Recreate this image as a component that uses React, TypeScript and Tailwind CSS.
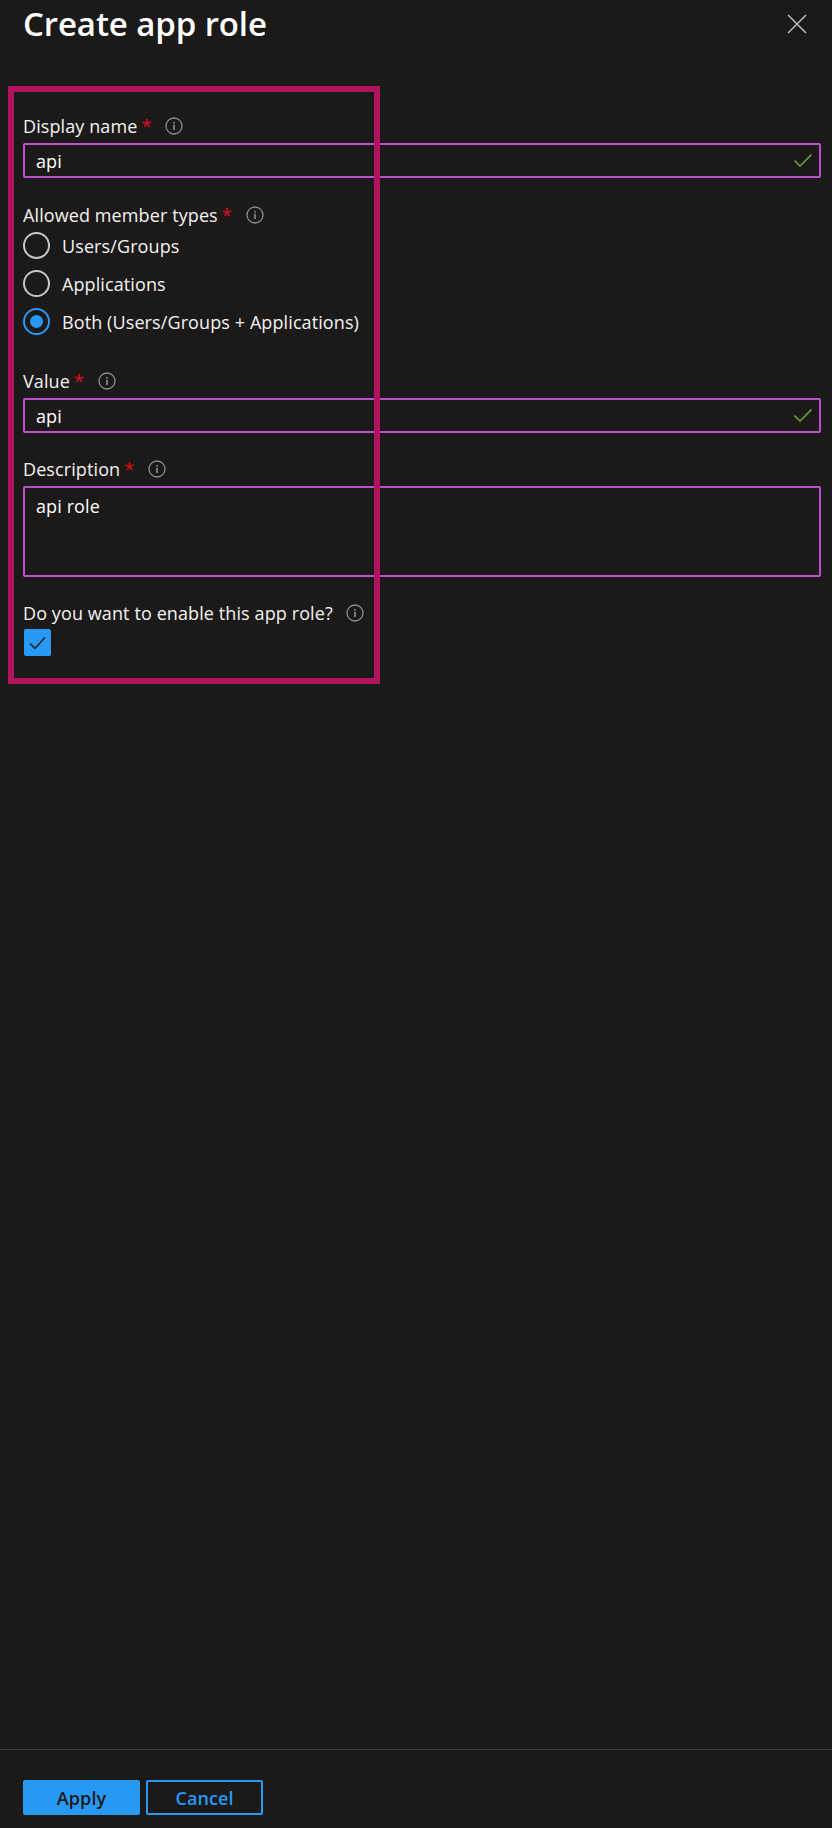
import React from "react";

function Info() {
  return (
    <svg width="18" height="18" viewBox="0 0 18 18" fill="none" className="block shrink-0">
      <circle cx="9" cy="9" r="8" stroke="#8f8d8b" strokeWidth="1.3" />
      <rect x="8.2" y="7.6" width="1.6" height="5.4" fill="#8f8d8b" />
      <rect x="8.2" y="4.9" width="1.6" height="1.6" fill="#8f8d8b" />
    </svg>
  );
}

function Label({ text, required, gap = "ml-[14px]" }: { text: string; required?: boolean; gap?: string }) {
  return (
    <div className="flex items-center h-[22px] mb-[6px]">
      <span>{text}</span>
      {required && <span className="text-[#e00b1c] ml-[4px] leading-none">*</span>}
      <span className={gap}><Info /></span>
    </div>
  );
}

function Tick() {
  return (
    <svg width="18" height="13" viewBox="0 0 18 13" fill="none" className="absolute right-[7px] top-[9px]">
      <path d="M0.5 6.5 L6 12 L17.5 0.5" stroke="#6b9a38" strokeWidth="1.6" />
    </svg>
  );
}

function TextInput({ value }: { value: string }) {
  return (
    <div className="relative h-[35px] border-2 border-[#c04fd0] rounded-[2px] pl-[11px] flex items-center text-white">
      {value}
      <Tick />
    </div>
  );
}

function Radio({ label, checked }: { label: string; checked?: boolean }) {
  return (
    <div className="flex items-center h-[27px] gap-[12px]">
      <span
        className={
          "w-[27px] h-[27px] rounded-full border-2 flex items-center justify-center " +
          (checked ? "border-[#2899f5]" : "border-[#c8c6c4]")
        }
      >
        {checked && <span className="w-[13px] h-[13px] rounded-full bg-[#2899f5]" />}
      </span>
      <span>{label}</span>
    </div>
  );
}

export default function App() {
  return (
    <div className="relative w-[832px] h-[1828px] bg-[#1b1a19] text-[#f3f2f1] flex flex-col overflow-hidden font-['Open_Sans','Noto_Sans',sans-serif] text-[18px] leading-[22px] tracking-[0.1px]">
      <div className="flex items-start justify-between pl-[23px] pr-[25px] h-[115px]">
        <h1 className="text-[33px] leading-[48px] font-semibold text-white tracking-[-0.1px]">Create app role</h1>
        <svg width="20" height="20" viewBox="0 0 20 20" fill="none" className="mt-[14px]">
          <path d="M1 1 L19 19 M19 1 L1 19" stroke="#c8c6c4" strokeWidth="1.4" />
        </svg>
      </div>

      <div className="pl-[23px] pr-[11px] flex-1">
        <Label text="Display name" required />
        <TextInput value="api" />

        <div className="mt-[26px]">
          <Label text="Allowed member types" required />
          <div className="flex flex-col gap-[11px]">
            <Radio label="Users/Groups" />
            <Radio label="Applications" />
            <Radio label="Both (Users/Groups + Applications)" checked />
          </div>
        </div>

        <div className="mt-[35px]">
          <Label text="Value" required />
          <TextInput value="api" />
        </div>

        <div className="mt-[25px]">
          <Label text="Description" required />
          <div className="h-[91px] border-2 border-[#c04fd0] rounded-[2px] pl-[11px] pt-[7px] text-white">api role</div>
        </div>

        <div className="mt-[25px]">
          <Label text="Do you want to enable this app role?" gap="ml-[13px]" />
          <div className="w-[27px] h-[27px] ml-[1px] -mt-[1px] bg-[#2899f5] rounded-[2px] flex items-center justify-center">
            <svg width="17" height="14" viewBox="0 0 17 14" fill="none">
              <path d="M1 7.5 L6 12.5 L16 1.5" stroke="#1b1a19" strokeWidth="1.4" />
            </svg>
          </div>
        </div>
      </div>

      <div className="h-[79px] border-t border-[#3b3a39] pl-[23px] pt-[30px] flex gap-[6px] font-semibold">
        <button className="w-[117px] h-[35px] bg-[#2899f5] rounded-[2px] text-[#1b1a19]">Apply</button>
        <button className="w-[117px] h-[35px] border-2 border-[#2899f5] rounded-[2px] text-[#2899f5]">Cancel</button>
      </div>

      <div className="absolute left-[8px] top-[86px] w-[372px] h-[598px] border-[6px] border-[#b0145f] pointer-events-none" />
    </div>
  );
}
